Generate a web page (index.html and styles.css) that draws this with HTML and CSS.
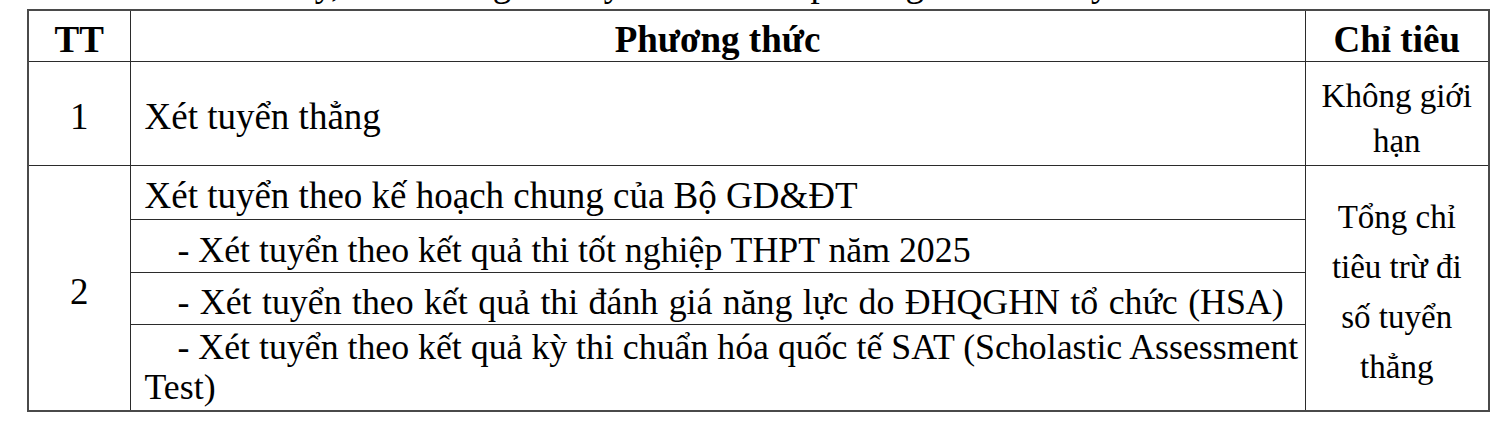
FILE: index.html
```html
<!DOCTYPE html>
<html lang="vi">
<head>
<meta charset="utf-8">
<title>Phương thức tuyển sinh</title>
<link rel="stylesheet" href="styles.css">
</head>
<body>
<div class="page">
  <div class="lead"><p class="lead-text">năm nay, nhà trường xét tuyển sinh theo phương thức xét tuyển như sau:</p></div>
  <table class="grid">
    <colgroup>
      <col class="c-tt">
      <col class="c-pt">
      <col class="c-ct">
    </colgroup>
    <thead>
      <tr class="r-head">
        <th>TT</th>
        <th>Phương thức</th>
        <th>Chỉ tiêu</th>
      </tr>
    </thead>
    <tbody>
      <tr class="r-one">
        <td class="num">1</td>
        <td class="method">Xét tuyển thẳng</td>
        <td class="quota quota-short">Không giới<br>hạn</td>
      </tr>
      <tr class="r-a">
        <td class="num" rowspan="4">2</td>
        <td class="method">Xét tuyển theo kế hoạch chung của Bộ GD&amp;ĐT</td>
        <td class="quota quota-long" rowspan="4">Tổng chỉ<br>tiêu trừ đi<br>số tuyển<br>thẳng</td>
      </tr>
      <tr class="r-b">
        <td class="method sub">- Xét tuyển theo kết quả thi tốt nghiệp THPT năm 2025</td>
      </tr>
      <tr class="r-c">
        <td class="method sub sub-wide">- Xét tuyển theo kết quả thi đánh giá năng lực do ĐHQGHN tổ chức (HSA)</td>
      </tr>
      <tr class="r-d">
        <td class="method sub sub-last">- Xét tuyển theo kết quả kỳ thi chuẩn hóa quốc tế SAT (Scholastic Assessment Test)</td>
      </tr>
    </tbody>
  </table>
</div>
</body>
</html>
```

FILE: styles.css
```css
html, body {
  margin: 0;
  padding: 0;
  background: #ffffff;
}

body {
  font-family: "Liberation Serif", "Times New Roman", serif;
  color: #000000;
}

.page {
  padding: 0 0 0 27px;
  width: 1461px;
}

.lead {
  height: 5px;
  overflow: hidden;
  display: flex;
  align-items: flex-end;
  margin-bottom: 4px;
  padding-left: 180px;
}

.lead-text {
  margin: 0;
  font-size: 37px;
  line-height: 1.107;
  white-space: nowrap;
}

.grid {
  border-collapse: collapse;
  table-layout: fixed;
  width: 1461px;
  border: 2px solid #4a4a4a;
}

.c-tt { width: 102px; }
.c-pt { width: 1175px; }
.c-ct { width: 184px; }

.grid th,
.grid td {
  border: 1px solid #2b2b2b;
  padding: 8px 0 0 0;
  vertical-align: middle;
}

.grid th {
  font-size: 37px;
  font-weight: bold;
  text-align: center;
  line-height: 40px;
}

.r-head { height: 51px; }
.r-one { height: 104px; }
.r-a { height: 54px; }
.r-b { height: 53px; }
.r-c { height: 52px; }
.r-d { height: 87px; }

.num {
  font-size: 37px;
  text-align: center;
  line-height: 40px;
}

.grid .method {
  font-size: 37px;
  line-height: 40px;
  padding: 8px 2px 0 14px;
  text-align: left;
}

.grid .sub {
  font-size: 35.8px;
  text-indent: 33px;
}

.grid .sub-wide {
  word-spacing: 1.5px;
}

.grid .sub-last {
  padding-top: 0;
}

.quota {
  font-size: 33px;
  text-align: center;
}

.grid .quota-short {
  line-height: 45px;
  padding-top: 12px;
}

.grid .quota-long {
  line-height: 50px;
}
```
